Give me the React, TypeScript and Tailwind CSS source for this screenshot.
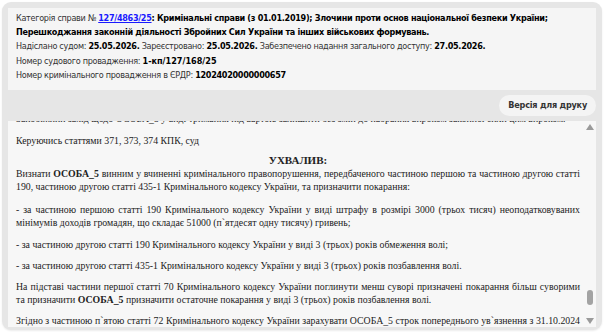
import React from "react";

const sans = { fontFamily: '"DejaVu Sans Condensed", "DejaVu Sans", sans-serif' };
const serif = { fontFamily: '"Liberation Serif", "Times New Roman", serif' };

function Scrollbar() {
  return (
    <div className="w-[12px] flex flex-col items-center justify-between py-[3px] shrink-0">
      <svg width="8" height="6" viewBox="0 0 8 6"><path d="M4 0 L8 6 L0 6 Z" fill="#9a9a9a" /></svg>
      <div className="flex-1 w-full flex flex-col justify-end items-center pb-[13px]">
        <div className="w-[6px] h-[15px] rounded-[3px] bg-[#a3a3a3]" />
      </div>
      <svg width="8" height="6" viewBox="0 0 8 6"><path d="M0 0 L8 0 L4 6 Z" fill="#9a9a9a" /></svg>
    </div>
  );
}

export default function App() {
  return (
    <div className="bg-white w-[608px] h-[332px] pl-[2px] pt-[2px]">
      <div className="w-[600px] h-[328px] rounded-[9px] bg-[#e6e6e6] px-[6px] pt-[6px] pb-[3px] flex flex-col shadow-[0_1px_2px_rgba(0,0,0,0.08)]">
        <div className="bg-[#f5f5f5] h-[82px] px-[8px] pt-[3px] text-[9px] tracking-[-0.3px] leading-[14px] text-[#333]" style={sans}>
          <div>
            Категорія справи №{" "}
            <a className="font-bold text-[#1a1aff] underline">127/4863/25</a>
            <b className="text-black">: Кримінальні справи (з 01.01.2019); Злочини проти основ національної безпеки України; Перешкоджання законній діяльності Збройних Сил України та інших військових формувань.</b>
          </div>
          <div>
            Надіслано судом: <b className="text-black">25.05.2026.</b> Зареєстровано: <b className="text-black">25.05.2026.</b> Забезпечено надання загального доступу: <b className="text-black">27.05.2026.</b>
          </div>
          <div className="mt-[1px]">
            Номер судового провадження: <b className="text-black tracking-[0px]">1-кп/127/168/25</b>
          </div>
          <div>
            Номер кримінального провадження в ЄРДР: <b className="text-black">12024020000000657</b>
          </div>
        </div>
        <div className="h-[31px] flex items-center justify-end">
          <button className="h-[21px] px-[9px] rounded-[11px] bg-[#f4f4f4] text-[9px] tracking-[-0.2px] font-bold text-[#333]" style={sans}>
            Версія для друку
          </button>
        </div>
        <div className="flex-1 bg-[#f7f7f7] flex overflow-hidden">
          <div className="flex-1 overflow-hidden pl-[8px] pr-[4px] text-[9.8px] leading-[13px] text-[#222] text-justify" style={serif}>
            <div className="-mt-[9px]">
              <p className="whitespace-nowrap">Запобіжний захід щодо ОСОБА_5 у виді тримання під вартою залишити без змін до набрання вироком законної сили цим вироком.</p>
              <p className="mt-[9px]">Керуючись статтями 371, 373, 374 КПК, суд</p>
              <p className="mt-[7px] text-center font-bold text-[11px]">УХВАЛИВ:</p>
              <p className="mt-0">Визнати <b>ОСОБА_5</b> винним у вчиненні кримінального правопорушення, передбаченого частиною першою та частиною другою статті 190, частиною другою статті 435-1 Кримінального кодексу України, та призначити покарання:</p>
              <p className="mt-[10px]">- за частиною першою статті 190 Кримінального кодексу України у виді штрафу в розмірі 3000 (трьох тисяч) неоподатковуваних мінімумів доходів громадян, що складає 51000 (п`ятдесят одну тисячу) гривень;</p>
              <p className="mt-[9px]">- за частиною другою статті 190 Кримінального кодексу України у виді 3 (трьох) років обмеження волі;</p>
              <p className="mt-[8px]">- за частиною другою статті 435-1 Кримінального кодексу України у виді 3 (трьох) років позбавлення волі.</p>
              <p className="mt-[8px]">На підставі частини першої статті 70 Кримінального кодексу України поглинути менш суворі призначені покарання більш суворими та призначити <b>ОСОБА_5</b> призначити остаточне покарання у виді 3 (трьох) років позбавлення волі.</p>
              <p className="mt-[8px]">Згідно з частиною п`ятою статті 72 Кримінального кодексу України зарахувати ОСОБА_5 строк попереднього ув`язнення з 31.10.2024 року по день набрання вироком законної сили.</p>
            </div>
          </div>
          <Scrollbar />
        </div>
      </div>
    </div>
  );
}
